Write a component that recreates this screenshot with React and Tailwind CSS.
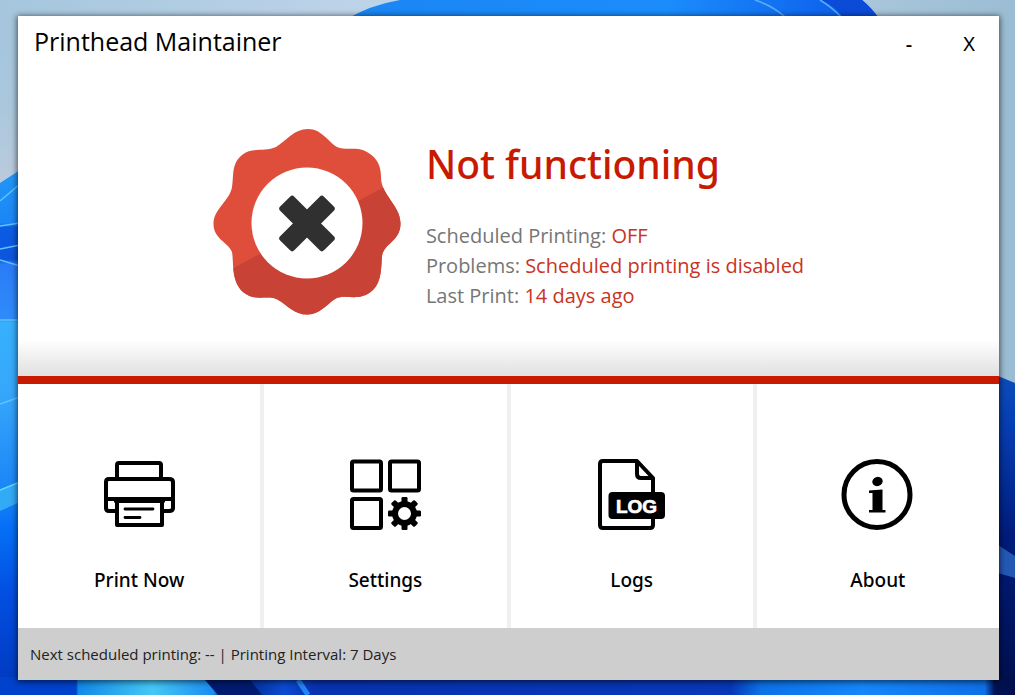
import React from "react";

function Wallpaper() {
  return (
    <svg
      aria-hidden="true"
      viewBox="0 0 1015 695"
      preserveAspectRatio="none"
      className="absolute inset-0 h-full w-full"
    >
      <defs>
        <linearGradient id="sky" x1="0" y1="0" x2="1" y2="0">
          <stop offset="0" stopColor="#a5c6dd" />
          <stop offset=".35" stopColor="#bdd3e8" />
          <stop offset=".85" stopColor="#a9c6da" />
          <stop offset="1" stopColor="#9bbdd4" />
        </linearGradient>
        <linearGradient id="haze" x1="0" y1="0" x2="0" y2="1">
          <stop offset="0" stopColor="#a5c6dd" stopOpacity="0" />
          <stop offset="1" stopColor="#bccbdc" />
        </linearGradient>
        <linearGradient id="top" x1="0" y1="0" x2="1" y2="0">
          <stop offset="0" stopColor="#1a86f4" />
          <stop offset=".6" stopColor="#1b8dfb" />
          <stop offset="1" stopColor="#0b58ea" />
        </linearGradient>
        <linearGradient id="left" x1="0" y1="170" x2="0" y2="695" gradientUnits="userSpaceOnUse">
          <stop offset="0" stopColor="#2197f8" />
          <stop offset=".1" stopColor="#1b86f5" />
          <stop offset=".11" stopColor="#0c5ce6" />
          <stop offset=".17" stopColor="#0c55dc" />
          <stop offset=".18" stopColor="#2a7cf6" />
          <stop offset=".285" stopColor="#2f8bfa" />
          <stop offset=".29" stopColor="#37b0fc" />
          <stop offset=".42" stopColor="#36a8fb" />
          <stop offset=".62" stopColor="#1a83f6" />
          <stop offset=".68" stopColor="#0570f6" />
          <stop offset=".8" stopColor="#0350e2" />
          <stop offset="1" stopColor="#0137bd" />
        </linearGradient>
        <linearGradient id="right" x1="0" y1="0" x2="0" y2="1">
          <stop offset="0" stopColor="#0c4cba" />
          <stop offset=".15" stopColor="#063fb4" />
          <stop offset=".5" stopColor="#001c7c" />
          <stop offset="1" stopColor="#000f4b" />
        </linearGradient>
        <linearGradient id="bottom" x1="0" y1="0" x2="1" y2="0">
          <stop offset="0" stopColor="#0142cc" />
          <stop offset=".075" stopColor="#0142cc" />
          <stop offset=".077" stopColor="#1089e8" />
          <stop offset=".15" stopColor="#45c8f6" />
          <stop offset=".21" stopColor="#1a8df2" />
          <stop offset=".22" stopColor="#001b70" />
          <stop offset=".28" stopColor="#0b4bd2" />
          <stop offset=".31" stopColor="#0732b0" />
          <stop offset=".72" stopColor="#0838b8" />
          <stop offset=".75" stopColor="#0b72e8" />
          <stop offset=".85" stopColor="#1587fa" />
          <stop offset=".97" stopColor="#0e70e8" />
          <stop offset=".98" stopColor="#001354" />
          <stop offset="1" stopColor="#000f4b" />
        </linearGradient>
      </defs>
      <rect width="1015" height="695" fill="url(#sky)" />
      <rect y="20" width="20" height="165" fill="url(#haze)" />
      <path d="M345 20 Q370 5 400 0 H862 Q872 8 880 20Z" fill="url(#top)" />
      <path d="M822 0 Q838 8 845 20 H880 Q872 8 862 0Z" fill="#0b4bd8" />
      <path d="M755 0 Q773 6 785 17 M820 0 Q833 8 841 17" fill="none" stroke="#58aefb" strokeWidth="1.5" />
      <path d="M0 183 L20 170 V695 H0Z" fill="url(#left)" />
      <path d="M0 201 L20 184 M0 226 L20 223 M0 249 L20 245 M0 260 L20 266 M0 320 H20 M0 404 L20 397" stroke="#5cc4ff" strokeWidth="1.5" />
      <path d="M0 490 L20 482 V502 L0 511Z" fill="#32aaf6" />
      <path d="M0 490 L20 482" stroke="#59dcff" strokeWidth="1.5" />
      <path d="M998 376 L1015 383 V695 H998Z" fill="url(#right)" />
      <path d="M998 545 L1015 556 V578 L998 573Z" fill="#2358b4" />
      <rect y="677" width="1015" height="18" fill="url(#bottom)" />
      <path d="M205 680 L218 695 H262 L250 680Z" fill="#001b70" />
      <path d="M298 680 L308 695" stroke="#2484f5" strokeWidth="5" />
    </svg>
  );
}

function Seal() {
  const outline =
    "M107 14C121 14 127 27 136 32C145 36 157 31 166 37C177 43 180 52 180 62C180 80 199 90 199.500 108C200 126 183 128 181 141C180 152 181 166 172 175C158 188 145 178 134 184C125 190 119 199 107 199.500C94 200 87 191 79 186C68 178 55 188 42 177C30 166 33 148 31 137C27 127 12 124 12.500 108C13 94 29 85 31 72C33 61 30 49 41 40C51 32 64 37 75 32C85 26 93 14 107 14Z";
  return (
    <svg aria-hidden="true" viewBox="0 0 215 210" className="h-[210px] w-[215px] shrink-0">
      <clipPath id="seal-clip">
        <path d={outline} />
      </clipPath>
      <path d={outline} fill="#df4d3b" />
      <path d="M25 157L185 71H215V210H25Z" fill="#c84335" clipPath="url(#seal-clip)" />
      <circle cx="106" cy="108" r="55.500" fill="#fff" />
      <g fill="#303030" transform="rotate(45 106 108.500)">
        <rect x="75" y="98.500" width="62" height="20" rx="3" />
        <rect x="96" y="77.500" width="20" height="62" rx="3" />
      </g>
    </svg>
  );
}

function PrinterIcon() {
  return (
    <svg aria-hidden="true" viewBox="0 0 100 90" className="h-[90px] w-[100px]" fill="none" stroke="#000" strokeWidth="4" strokeLinejoin="round">
      <path d="M28 29V15Q28 13 30 13H70Q72 13 72 15V29" />
      <path d="M26 61H20Q17 61 17 58V32Q17 29 20 29H80Q84 29 84 32V58Q84 61 80 61H74" />
      <path d="M17 49H84" />
      <path d="M28 51H73V75H28Z" />
      <path d="M25 50H76" strokeWidth="5" />
      <path d="M36 59H64M36 67.500H51" strokeWidth="2.800" strokeLinecap="round" />
    </svg>
  );
}

function SettingsIcon() {
  return (
    <svg aria-hidden="true" viewBox="-4 0 100 90" className="h-[90px] w-[100px]" fill="none" stroke="#000" strokeWidth="4">
      <rect x="13" y="11.500" width="29" height="29" rx="1.500" />
      <rect x="51" y="11.500" width="29" height="29" rx="1.500" />
      <rect x="13" y="49" width="29" height="29" rx="1.500" />
      <circle cx="65.500" cy="63.500" r="9.500" strokeWidth="6" />
      <g fill="#000" stroke="none">
        {[0, 45, 90, 135, 180, 225, 270, 315].map((angle) => (
          <rect key={angle} x="62.500" y="47" width="6" height="6" rx="1.200" transform={`rotate(${angle} 65.500 63.500)`} />
        ))}
      </g>
    </svg>
  );
}

function LogIcon() {
  return (
    <svg aria-hidden="true" viewBox="-3 0 100 90" className="h-[90px] w-[100px]">
      <path d="M68 44V28L52 11H18Q15 11 15 14V75Q15 78 18 78H65Q68 78 68 75V66M52 11V24Q52 28 56 28H68" fill="none" stroke="#000" strokeWidth="4" strokeLinejoin="round" />
      <rect x="23.500" y="42" width="56.500" height="27" rx="4" />
      <text x="51.500" y="62.500" textAnchor="middle" fill="#fff" stroke="#fff" strokeWidth=".7" className="font-['Liberation_Sans'] text-[19px] font-bold">
        LOG
      </text>
    </svg>
  );
}

function InfoIcon() {
  return (
    <svg aria-hidden="true" viewBox="-1 0 100 90" className="h-[90px] w-[100px]">
      <circle cx="48" cy="44.500" r="33" fill="none" stroke="#000" strokeWidth="5" />
      <ellipse cx="48.500" cy="31.500" rx="5.300" ry="4.600" transform="rotate(-20 48.500 31.500)" />
      <path d="M40 40.500L53.500 39.500V60H56.500V62.500H40V60H43.500V43H40Z" />
    </svg>
  );
}

const actions = [
  { label: "Print Now", Icon: PrinterIcon },
  { label: "Settings", Icon: SettingsIcon },
  { label: "Logs", Icon: LogIcon },
  { label: "About", Icon: InfoIcon },
];

const details = [
  { label: "Scheduled Printing:", value: "OFF" },
  { label: "Problems:", value: "Scheduled printing is disabled" },
  { label: "Last Print:", value: "14 days ago" },
];

export default function App() {
  return (
    <div className="relative flex min-h-screen pt-4 pr-4 pb-[15px] pl-[18px] font-['Noto_Sans','Open_Sans',sans-serif]">
      <Wallpaper />
      <main className="relative flex flex-1 flex-col bg-white shadow-[0_1px_6px_1px_rgba(0,0,0,0.6)]">
        <header className="flex h-14 items-center justify-between pr-3 pl-4">
          <h1 className="pb-1 font-['Open_Sans',sans-serif] text-[25px] text-black">Printhead Maintainer</h1>
          <div className="flex gap-6 text-xl text-black">
            <button type="button" aria-label="Minimize" className="h-9 w-9 font-medium">-</button>
            <button type="button" aria-label="Close" className="h-9 w-9">X</button>
          </div>
        </header>
        <section className="flex flex-1 items-start justify-center bg-linear-to-b from-white from-88% to-[#e0e0e0] pt-[43px] pr-3">
          <Seal />
          <div className="pt-5 pl-2.5">
            <h2 className="text-[39px] leading-[58px] font-medium text-[#c81a00]">Not functioning</h2>
            <div className="pt-7 font-['Open_Sans',sans-serif] text-xl leading-[30px] text-[#767676]">
              {details.map(({ label, value }) => (
                <p key={label}>
                  {label} <span className="text-[#c93422]">{value}</span>
                </p>
              ))}
            </div>
          </div>
        </section>
        <nav className="grid h-[252px] grid-cols-4 gap-1 border-t-8 border-[#c81a00] bg-[#f0f0f0]">
          {actions.map(({ label, Icon }) => (
            <button key={label} type="button" className="flex flex-col items-center bg-white pt-[66px] text-black">
              <Icon />
              <span className="pt-6 text-[19px] leading-8 font-medium">{label}</span>
            </button>
          ))}
        </nav>
        <footer className="flex h-[52px] items-center bg-[#cecece] px-3 font-['Open_Sans',sans-serif] text-[15px] text-[#222]">
          Next scheduled printing: -- | Printing Interval: 7 Days
        </footer>
      </main>
    </div>
  );
}
